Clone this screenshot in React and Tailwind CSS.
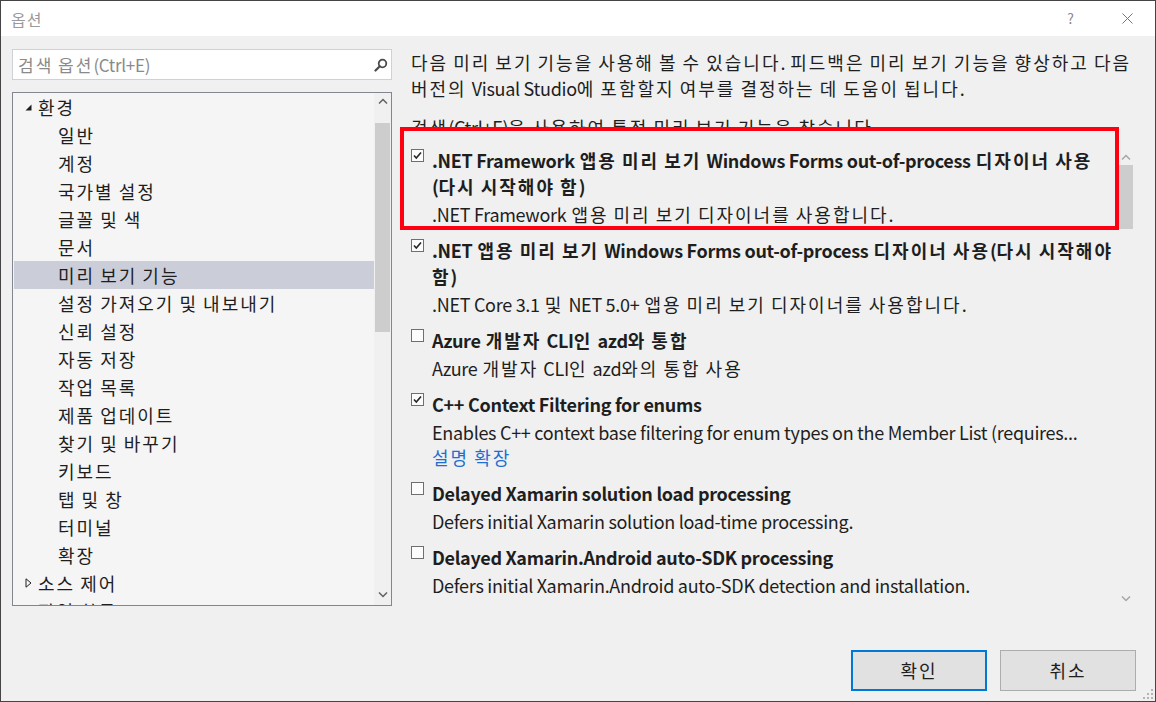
import React from "react";

const SPLIT = /([\uAC00-\uD7A3]+|\s+)/;
const IS_H = /^[\uAC00-\uD7A3]+$/;
const IS_S = /^\s+$/;

function T({ s }) {
  const parts = s.split(SPLIT).filter((p) => p.length > 0);
  return (
    <>
      {parts.map((p, i) => {
        if (IS_H.test(p)) {
          return (
            <span key={i} className="tracking-[2px]">
              {p}
            </span>
          );
        }
        if (IS_S.test(p)) {
          const nearH = IS_H.test(parts[i - 1] || "") || IS_H.test(parts[i + 1] || "");
          return (
            <span key={i} className={nearH ? "tracking-[1px]" : "tracking-[-0.3px]"}>
              {p}
            </span>
          );
        }
        return (
          <span key={i} className="tracking-[-0.3px]">
            {p}
          </span>
        );
      })}
    </>
  );
}

const TREE = [
  { t: "환경", lvl: 0, exp: "open" },
  { t: "일반", lvl: 1 },
  { t: "계정", lvl: 1 },
  { t: "국가별 설정", lvl: 1 },
  { t: "글꼴 및 색", lvl: 1 },
  { t: "문서", lvl: 1 },
  { t: "미리 보기 기능", lvl: 1, sel: true },
  { t: "설정 가져오기 및 내보내기", lvl: 1 },
  { t: "신뢰 설정", lvl: 1 },
  { t: "자동 저장", lvl: 1 },
  { t: "작업 목록", lvl: 1 },
  { t: "제품 업데이트", lvl: 1 },
  { t: "찾기 및 바꾸기", lvl: 1 },
  { t: "키보드", lvl: 1 },
  { t: "탭 및 창", lvl: 1 },
  { t: "터미널", lvl: 1 },
  { t: "확장", lvl: 1 },
  { t: "소스 제어", lvl: 0, exp: "closed" },
  { t: "작업 항목", lvl: 0, exp: "closed" },
];

function CheckBox({ checked }) {
  return (
    <div className="w-[13px] h-[13px] mt-[2px] shrink-0 border border-[#6f6f6f] bg-[#fcfcfc] flex items-center justify-center">
      {checked && (
        <svg width="11" height="11" viewBox="0 0 11 11">
          <path d="M2 5.5 L4.3 8 L9 2.5" fill="none" stroke="#262626" strokeWidth="1.6" />
        </svg>
      )}
    </div>
  );
}

function Chevron({ up, color }) {
  return (
    <svg width="10" height="7" viewBox="0 0 10 7">
      <path
        d={up ? "M1 5.5 L5 1.5 L9 5.5" : "M1 1.5 L5 5.5 L9 1.5"}
        fill="none"
        stroke={color}
        strokeWidth="1.5"
      />
    </svg>
  );
}

function Item({ checked, title, title2, desc, link }) {
  return (
    <div className="flex gap-[8px]">
      <CheckBox checked={checked} />
      <div className="flex flex-col min-w-0">
        <div className="font-bold text-[18px] leading-[26px] whitespace-nowrap text-[#1e1e1e]">
          <T s={title} />
          {title2 && (
            <>
              <br />
              <T s={title2} />
            </>
          )}
        </div>
        <div className="mt-[2px] text-[18px] leading-[26px] whitespace-nowrap text-[#1e1e1e]">
          <T s={desc} />
        </div>
        {link && (
          <div className="text-[18px] leading-[25px] text-[#1f6fd1]">
            <T s={link} />
          </div>
        )}
      </div>
    </div>
  );
}

export default function App() {
  return (
    <div className="w-[1156px] h-[702px] border border-[#444444] bg-[#f0f0f0] flex flex-col overflow-hidden relative font-['Noto_Sans_CJK_KR',sans-serif] text-[#1e1e1e]">
      {/* Title bar */}
      <div className="h-[35px] bg-white flex items-center pl-[10px] pr-[22px] shrink-0">
        <span className="text-[16px] text-[#9a9a9a] tracking-[1px]">옵션</span>
        <span className="ml-auto text-[14px] text-[#8a8a8a] mr-[48px]">?</span>
        <svg width="11" height="11" viewBox="0 0 11 11">
          <path d="M0.5 0.5 L10.5 10.5 M10.5 0.5 L0.5 10.5" stroke="#777777" strokeWidth="1" />
        </svg>
      </div>

      {/* Main */}
      <div className="flex pt-[13px] h-[583px] shrink-0">
        {/* Left column */}
        <div className="ml-[11px] w-[380px] flex flex-col">
          <div className="h-[31px] border border-[#cdd1d8] bg-white flex items-center pl-[5px] pr-[3px]">
            <span className="text-[17px] text-[#8a8a8a]">
              <T s="검색 옵션(Ctrl+E)" />
            </span>
            <svg className="ml-auto" width="14" height="14" viewBox="0 0 14 14">
              <circle cx="8.5" cy="5.5" r="3.8" fill="none" stroke="#4a4a4a" strokeWidth="1.8" />
              <path d="M5.8 8.2 L1.5 12.5" stroke="#4a4a4a" strokeWidth="2.2" strokeLinecap="round" />
            </svg>
          </div>
          <div className="mt-[12px] h-[514px] border border-[#82868f] bg-[#f5f5f5] flex overflow-hidden">
            <div className="flex-1 flex flex-col overflow-hidden pl-[1px]">
              {TREE.map((r, i) => (
                <div
                  key={i}
                  className={
                    "h-[28px] shrink-0 flex items-center text-[18px] whitespace-nowrap " +
                    (r.sel ? "bg-[#cbcdd9]" : "")
                  }
                >
                  <div className="w-[24px] shrink-0 flex justify-end pr-[6px]">
                    {r.exp === "open" && (
                      <svg width="7" height="7" viewBox="0 0 7 7">
                        <path d="M6.5 0.5 L6.5 6.5 L0.5 6.5 Z" fill="#1e1e1e" />
                      </svg>
                    )}
                    {r.exp === "closed" && (
                      <svg width="7" height="10" viewBox="0 0 7 10">
                        <path d="M1 0.8 L6 5 L1 9.2 Z" fill="none" stroke="#1e1e1e" strokeWidth="1" />
                      </svg>
                    )}
                  </div>
                  <span className={r.lvl === 1 ? "pl-[20px]" : ""}>
                    <T s={r.t} />
                  </span>
                </div>
              ))}
            </div>
            <div className="w-[17px] shrink-0 bg-[#f0f0f0] flex flex-col items-center">
              <div className="h-[17px] flex items-center justify-center">
                <Chevron up color="#606060" />
              </div>
              <div className="mt-[13px] w-[15px] h-[209px] bg-[#cdcdcd]" />
              <div className="flex-1" />
              <div className="h-[17px] mb-[2px] flex items-center justify-center">
                <Chevron color="#606060" />
              </div>
            </div>
          </div>
        </div>

        {/* Right column */}
        <div className="ml-[8px] w-[735px] flex flex-col relative">
          <div className="h-[80px] overflow-hidden pl-[11px] shrink-0">
            <div className="text-[18px] leading-[26px] whitespace-nowrap">
              <T s="다음 미리 보기 기능을 사용해 볼 수 있습니다. 피드백은 미리 보기 기능을 향상하고 다음" />
              <br />
              <T s="버전의 Visual Studio에 포함할지 여부를 결정하는 데 도움이 됩니다." />
            </div>
            <div className="mt-[13px] text-[18px] leading-[26px] whitespace-nowrap">
              <T s="검색(Ctrl+E)을 사용하여 특정 미리 보기 기능을 찾습니다." />
            </div>
          </div>
          <div className="flex h-[477px]">
            <div className="flex-1 overflow-hidden pl-[11px] pt-[18px] flex flex-col gap-[10px]">
              <Item
                checked
                title=".NET Framework 앱용 미리 보기 Windows Forms out-of-process 디자이너 사용"
                title2="(다시 시작해야 함)"
                desc=".NET Framework 앱용 미리 보기 디자이너를 사용합니다."
              />
              <Item
                checked
                title=".NET 앱용 미리 보기 Windows Forms out-of-process 디자이너 사용(다시 시작해야"
                title2="함)"
                desc=".NET Core 3.1 및 NET 5.0+ 앱용 미리 보기 디자이너를 사용합니다."
              />
              <Item title="Azure 개발자 CLI인 azd와 통합" desc="Azure 개발자 CLI인 azd와의 통합 사용" />
              <Item
                checked
                title="C++ Context Filtering for enums"
                desc="Enables C++ context base filtering for enum types on the Member List (requires..."
                link="설명 확장"
              />
              <Item
                title="Delayed Xamarin solution load processing"
                desc="Defers initial Xamarin solution load-time processing."
              />
              <Item
                title="Delayed Xamarin.Android auto-SDK processing"
                desc="Defers initial Xamarin.Android auto-SDK detection and installation."
              />
            </div>
            <div className="w-[14px] mr-[2px] shrink-0 flex flex-col items-center">
              <div className="mt-[20px] h-[16px] flex items-center justify-center">
                <Chevron up color="#a6a6a6" />
              </div>
              <div className="w-[14px] h-[64px] bg-[#cdcdcd]" />
              <div className="flex-1" />
              <div className="h-[16px] flex items-center justify-center">
                <Chevron color="#a6a6a6" />
              </div>
            </div>
          </div>
          {/* annotation */}
          <div className="absolute left-0 top-[78px] w-[719px] h-[103px] border-[4px] border-[#ff0010]" />
        </div>
      </div>

      {/* Buttons */}
      <div className="mt-[31px] flex justify-end gap-[13px] pr-[19px] shrink-0">
        <button className="w-[136px] h-[41px] border-2 border-[#0078d7] bg-[#e1e1e1] text-[18px] text-[#1e1e1e] flex items-center justify-center tracking-[2px]">
          확인
        </button>
        <button className="w-[136px] h-[41px] border border-[#adadad] bg-[#e1e1e1] text-[18px] text-[#1e1e1e] flex items-center justify-center tracking-[2px]">
          취소
        </button>
      </div>

      <svg className="absolute right-[2px] bottom-[2px]" width="10" height="10" viewBox="0 0 10 10">
        <rect x="8" y="0" width="2" height="2" fill="#b4b4b4" />
        <rect x="4" y="4" width="2" height="2" fill="#b4b4b4" />
        <rect x="8" y="4" width="2" height="2" fill="#b4b4b4" />
        <rect x="0" y="8" width="2" height="2" fill="#b4b4b4" />
        <rect x="4" y="8" width="2" height="2" fill="#b4b4b4" />
        <rect x="8" y="8" width="2" height="2" fill="#b4b4b4" />
      </svg>
    </div>
  );
}
